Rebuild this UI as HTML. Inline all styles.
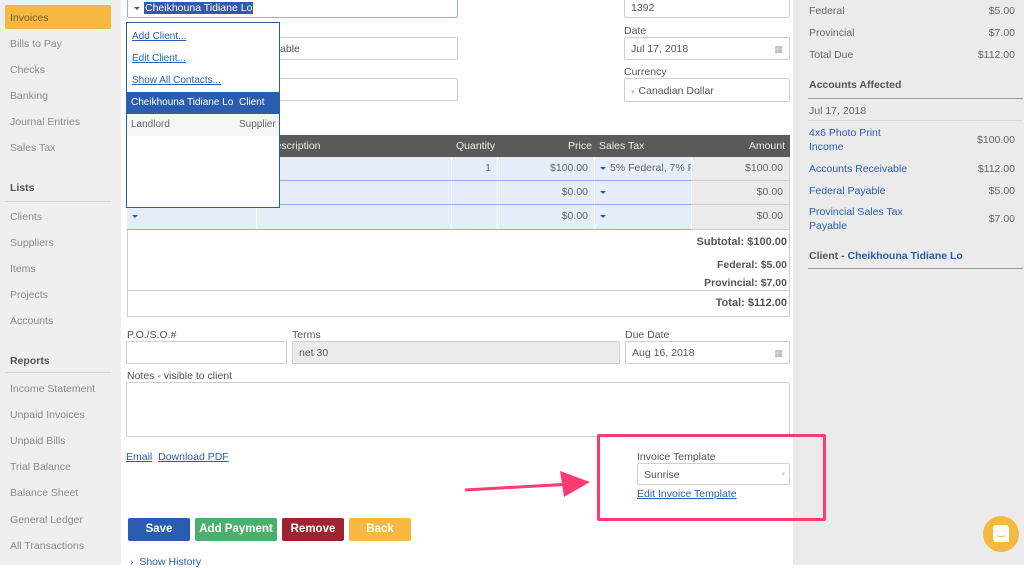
<!DOCTYPE html>
<html><head><meta charset="utf-8"><style>
*{margin:0;padding:0;box-sizing:border-box}
body{width:1024px;height:565px;overflow:hidden;position:relative;background:#fff;font-family:"Liberation Sans",sans-serif;font-size:10.5px;color:#555}
.a{position:absolute}
#side{left:0;top:0;width:121px;height:565px;background:#efefef}
.si{position:absolute;left:10px;color:#8a8a8a;font-size:10.5px;line-height:12px}
.sh{position:absolute;left:10px;color:#555;font-weight:bold;font-size:10.5px}
.inp{position:absolute;border:1px solid #cfcfcf;border-radius:2px;background:#fff;padding-left:6px;line-height:21px;color:#555;font-size:10.5px}
.lbl{position:absolute;font-size:10.5px;color:#555}
.lnk{color:#2a5db0;text-decoration:underline}
#right{left:793px;top:0;width:231px;height:565px;background:#ebebeb}
.rl{position:absolute;left:16px;font-size:10.5px;color:#666}
.rv{position:absolute;right:9px;font-size:10.5px;color:#666}
.bl{color:#2a5db0}
.cell{position:absolute;background:#e6edf8;border-bottom:1px solid #8fb0e0;border-right:2px solid #fff;text-align:right;padding-right:6px;line-height:23px;color:#666;font-size:10.5px}
.btn{position:absolute;top:518px;height:23px;color:#fff;font-weight:bold;font-size:11.5px;text-align:center;line-height:23px;border-radius:2px}
.tot{position:absolute;right:237px;font-weight:bold;color:#555}
.car{display:inline-block;width:0;height:0;border-left:3px solid transparent;border-right:3px solid transparent;border-top:3px solid #2a5db0;vertical-align:middle;margin-right:4px}
</style></head><body>
<div id="side" class="a">
<div class="a" style="left:5px;top:5px;width:106px;height:24px;background:#f5b942;border-radius:2px"></div>
<div class="si" style="top:12px;color:#7a5a20">Invoices</div>
<div class="si" style="top:38px">Bills to Pay</div>
<div class="si" style="top:64px">Checks</div>
<div class="si" style="top:90px">Banking</div>
<div class="si" style="top:116px">Journal Entries</div>
<div class="si" style="top:142px">Sales Tax</div>
<div class="sh" style="top:182px">Lists</div>
<div class="a" style="left:5px;top:201px;width:106px;height:1px;background:#d5d5d5"></div>
<div class="si" style="top:211px">Clients</div>
<div class="si" style="top:237px">Suppliers</div>
<div class="si" style="top:263px">Items</div>
<div class="si" style="top:289px">Projects</div>
<div class="si" style="top:315px">Accounts</div>
<div class="sh" style="top:355px">Reports</div>
<div class="a" style="left:5px;top:372px;width:106px;height:1px;background:#d5d5d5"></div>
<div class="si" style="top:383px">Income Statement</div>
<div class="si" style="top:409px">Unpaid Invoices</div>
<div class="si" style="top:435px">Unpaid Bills</div>
<div class="si" style="top:461px">Trial Balance</div>
<div class="si" style="top:487px">Balance Sheet</div>
<div class="si" style="top:514px">General Ledger</div>
<div class="si" style="top:540px">All Transactions</div>
</div>

<div class="inp" style="left:127px;top:-4px;width:331px;height:22px;border-color:#8fb0e0;line-height:22px"><span class="car"></span><span style="background:#2a5db0;color:#fff;padding:0 1px">Cheikhouna Tidiane Lo</span></div>
<div class="inp" style="left:127px;top:37px;width:331px;height:23px;line-height:23px"><span style="position:absolute;left:152px">able</span></div>
<div class="inp" style="left:127px;top:78px;width:331px;height:23px"></div>

<div class="inp" style="left:624px;top:-4px;width:166px;height:22px;line-height:22px">1392</div>
<div class="lbl" style="left:624px;top:25px">Date</div>
<div class="inp" style="left:624px;top:37px;width:166px;height:23px;line-height:23px">Jul 17, 2018<span style="position:absolute;right:6px;color:#aaa;font-size:9px">▦</span></div>
<div class="lbl" style="left:624px;top:66px">Currency</div>
<div class="inp" style="left:624px;top:78px;width:166px;height:24px;line-height:24px"><span style="color:#bbb;font-size:7px;margin-right:4px">▾</span>Canadian Dollar</div>

<!-- table -->
<div class="a" style="left:127px;top:135px;width:663px;height:182px;border:1px solid #cfcfcf;border-top:none"></div>
<div class="a" style="left:127px;top:135px;width:663px;height:22px;background:#5a5a5a;color:#eee;line-height:22px;font-size:10.5px">
<span class="a" style="left:141px">Description</span><span class="a" style="left:329px">Quantity</span><span class="a" style="left:441px">Price</span><span class="a" style="left:472px">Sales Tax</span><span class="a" style="right:5px">Amount</span></div>
<div class="cell" style="left:127px;top:157px;width:131px;height:24px"></div>
<div class="cell" style="left:257px;top:157px;width:196px;height:24px"></div>
<div class="cell" style="left:452px;top:157px;width:47px;height:24px">1</div>
<div class="cell" style="left:498px;top:157px;width:98px;height:24px">$100.00</div>
<div class="cell" style="left:595px;top:157px;width:98px;height:24px;text-align:left;padding-left:5px;overflow:hidden;white-space:nowrap"><span class="car"></span>5% Federal, 7% Pr</div>
<div class="cell" style="left:692px;top:157px;width:97px;height:24px;background:#ebebeb;border-bottom-color:#ccc;border-right:none">$100.00</div>
<div class="cell" style="left:127px;top:181px;width:131px;height:24px"></div>
<div class="cell" style="left:257px;top:181px;width:196px;height:24px"></div>
<div class="cell" style="left:452px;top:181px;width:47px;height:24px"></div>
<div class="cell" style="left:498px;top:181px;width:98px;height:24px">$0.00</div>
<div class="cell" style="left:595px;top:181px;width:98px;height:24px;text-align:left;padding-left:5px"><span class="car"></span></div>
<div class="cell" style="left:692px;top:181px;width:97px;height:24px;background:#ebebeb;border-bottom-color:#ccc;border-right:none">$0.00</div>
<div class="cell" style="left:127px;top:205px;width:131px;height:25px;text-align:left;padding-left:5px"><span class="car"></span></div>
<div class="cell" style="left:257px;top:205px;width:196px;height:25px"></div>
<div class="cell" style="left:452px;top:205px;width:47px;height:25px"></div>
<div class="cell" style="left:498px;top:205px;width:98px;height:25px">$0.00</div>
<div class="cell" style="left:595px;top:205px;width:98px;height:25px;text-align:left;padding-left:5px"><span class="car"></span></div>
<div class="cell" style="left:692px;top:205px;width:97px;height:25px;background:#ebebeb;border-bottom-color:#ccc;border-right:none">$0.00</div>
<div class="tot" style="top:236px;font-size:11px">Subtotal: $100.00</div>
<div class="tot" style="top:259px">Federal: $5.00</div>
<div class="tot" style="top:277px">Provincial: $7.00</div>
<div class="a" style="left:127px;top:290px;width:663px;height:1px;background:#cfcfcf"></div>
<div class="tot" style="top:297px;font-size:11px">Total: $112.00</div>

<!-- dropdown -->
<div class="a" style="left:126px;top:22px;width:154px;height:186px;background:#fff;border:1px solid #2a5db0;font-size:10px">
<div class="a lnk" style="left:5px;top:8px">Add Client...</div>
<div class="a lnk" style="left:5px;top:30px">Edit Client...</div>
<div class="a lnk" style="left:5px;top:52px">Show All Contacts...</div>
<div class="a" style="left:0;top:69px;width:152px;height:22px;background:#2a5db0;color:#fff;line-height:22px"><span class="a" style="left:4px">Cheikhouna Tidiane Lo</span><span class="a" style="left:112px">Client</span></div>
<div class="a" style="left:0;top:91px;width:152px;height:22px;background:#f6f6f6;color:#666;line-height:22px"><span class="a" style="left:4px">Landlord</span><span class="a" style="left:112px">Supplier</span></div>
</div>

<div class="lbl" style="left:127px;top:329px">P.O./S.O.#</div>
<div class="inp" style="left:126px;top:341px;width:161px;height:23px"></div>
<div class="lbl" style="left:292px;top:329px">Terms</div>
<div class="inp" style="left:292px;top:341px;width:328px;height:23px;background:#ebebeb;line-height:23px">net 30</div>
<div class="lbl" style="left:625px;top:329px">Due Date</div>
<div class="inp" style="left:625px;top:341px;width:165px;height:23px;line-height:23px">Aug 16, 2018<span style="position:absolute;right:6px;color:#aaa;font-size:9px">▦</span></div>
<div class="lbl" style="left:127px;top:370px">Notes - visible to client</div>
<div class="inp" style="left:126px;top:382px;width:664px;height:55px"></div>
<div class="a" style="left:126px;top:451px"><span class="lnk">Email</span>&nbsp; <span class="lnk">Download PDF</span></div>

<div id="right" class="a">
<div class="rl" style="top:5px">Federal</div><div class="rv" style="top:5px">$5.00</div>
<div class="rl" style="top:27px">Provincial</div><div class="rv" style="top:27px">$7.00</div>
<div class="rl" style="top:49px">Total Due</div><div class="rv" style="top:49px">$112.00</div>
<div class="rl" style="top:79px;font-weight:bold;color:#555">Accounts Affected</div>
<div class="a" style="left:15px;top:98px;width:215px;height:1px;background:#999"></div>
<div class="rl" style="top:105px">Jul 17, 2018</div>
<div class="a" style="left:15px;top:120px;width:215px;height:1px;background:#d5d5d5"></div>
<div class="rl bl" style="top:126px;line-height:14px">4x6 Photo Print<br>Income</div><div class="rv" style="top:134px">$100.00</div>
<div class="rl bl" style="top:163px">Accounts Receivable</div><div class="rv" style="top:163px">$112.00</div>
<div class="rl bl" style="top:185px">Federal Payable</div><div class="rv" style="top:185px">$5.00</div>
<div class="rl bl" style="top:205px;line-height:14px">Provincial Sales Tax<br>Payable</div><div class="rv" style="top:213px">$7.00</div>
<div class="rl" style="top:250px;font-weight:bold;color:#555">Client - <span class="bl">Cheikhouna Tidiane Lo</span></div>
<div class="a" style="left:15px;top:268px;width:215px;height:1px;background:#999"></div>
<div class="a" style="left:190px;top:516px;width:36px;height:36px;border-radius:50%;background:#f5b942"></div>
<div class="a" style="left:200px;top:525px;width:16px;height:17px;background:#fff;border-radius:3px 3px 0 3px"></div>
<div class="a" style="left:203px;top:533px;width:10px;height:4px;border-bottom:1.5px solid #f5b942;border-radius:0 0 5px 5px"></div>
</div>

<div class="a" style="left:597px;top:434px;width:229px;height:87px;border:3px solid #ff3b72;border-radius:2px"></div>
<div class="lbl" style="left:637px;top:451px">Invoice Template</div>
<div class="inp" style="left:637px;top:463px;width:153px;height:22px;line-height:22px">Sunrise<span style="position:absolute;right:4px;color:#ccc;font-size:7px">▾</span></div>
<div class="a lnk" style="left:637px;top:488px">Edit Invoice Template</div>
<svg class="a" style="left:460px;top:470px" width="140" height="30"><line x1="5" y1="20" x2="112" y2="14" stroke="#ff3b72" stroke-width="3"/><polygon points="130,12 100,1 104,27" fill="#ff3b72"/></svg>

<div class="btn" style="left:128px;width:62px;background:#2a5db0">Save</div>
<div class="btn" style="left:195px;width:82px;background:#4caf6e">Add Payment</div>
<div class="btn" style="left:282px;width:62px;background:#9e2432">Remove</div>
<div class="btn" style="left:349px;width:62px;background:#f5b942">Back</div>
<div class="a" style="left:130px;top:556px;color:#2a5db0"><span style="color:#666">›</span>&nbsp; Show History</div>
</body></html>
